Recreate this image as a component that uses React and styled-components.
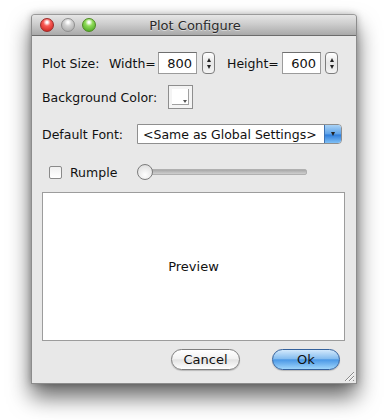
import React from 'react';
import styled, { createGlobalStyle } from 'styled-components';

const Global = createGlobalStyle`
    html, body {
        margin: 0;
        padding: 0;
        background: #ffffff;
    }
    body {
        font-family: "DejaVu Sans", "Liberation Sans", sans-serif;
        font-size: 12.5px;
        color: #111;
    }
`;

const Stage = styled.div`
    width: 390px;
    height: 420px;
    padding: 14px 0 0 31px;
    box-sizing: border-box;
`;

const Window = styled.div`
    position: relative;
    width: 326px;
    height: 370px;
    box-sizing: border-box;
    background: #e8e8e8;
    border: 1px solid #8c8c8c;
    border-top-color: #9a9a9a;
    border-radius: 4px 4px 0 0;
    box-shadow: 0 13px 22px rgba(0, 0, 0, 0.6), 0 0 7px rgba(0, 0, 0, 0.25);
    display: flex;
    flex-direction: column;
`;

const TitleBar = styled.div`
    height: 20px;
    flex: none;
    display: flex;
    align-items: center;
    padding-left: 8px;
    border-bottom: 1px solid #6c6c6c;
    border-radius: 3px 3px 0 0;
    background: linear-gradient(#e6e6e6, #cdcdcd 45%, #a9a9a9);
`;

const Lights = styled.div`
    display: flex;
    gap: 7px;
`;

const Light = styled.span`
    width: 14px;
    height: 14px;
    border-radius: 50%;
    box-sizing: border-box;
    border: 1px solid ${p => p.edge};
    background: radial-gradient(circle at 50% 28%, #ffffff 0 8%, ${p => p.hi} 35%, ${p => p.lo} 100%);
`;

const Title = styled.div`
    flex: 1;
    text-align: center;
    margin-right: 62px;
    font-size: 13px;
    color: #2a2a2a;
    text-shadow: 0 1px 0 rgba(255, 255, 255, 0.5);
`;

const Body = styled.div`
    flex: 1;
    display: flex;
    flex-direction: column;
    padding: 16px 11px 0 10px;
`;

const Row = styled.div`
    display: flex;
    align-items: center;
    height: ${p => p.h}px;
    margin-top: ${p => p.mt || 0}px;
    padding-left: ${p => p.pl || 0}px;
`;

const Label = styled.span`
    width: ${p => p.w}px;
    flex: none;
    white-space: nowrap;
`;

const NumField = styled.div`
    width: 39px;
    height: 22px;
    box-sizing: border-box;
    background: #fff;
    border: 1px solid #9b9b9b;
    border-top-color: #6f6f6f;
    display: flex;
    align-items: center;
    justify-content: flex-end;
    padding-right: 4px;
    font-size: 13px;
`;

const Stepper = styled.div`
    width: 13px;
    height: 22px;
    box-sizing: border-box;
    margin-left: ${p => p.ml}px;
    border: 1px solid #7d7d7d;
    border-radius: 4px;
    background: linear-gradient(#ffffff, #e6e6e6 50%, #f4f4f4);
    display: flex;
    flex-direction: column;
    align-items: center;
    justify-content: center;
    gap: 3px;
`;

const Arrow = styled.span`
    width: 0;
    height: 0;
    border-left: 2.5px solid transparent;
    border-right: 2.5px solid transparent;
    ${p => (p.up ? 'border-bottom: 4px solid #222;' : 'border-top: 4px solid #222;')}
`;

const ColorWell = styled.div`
    width: 25px;
    height: 24px;
    box-sizing: border-box;
    border: 1px solid #8e8e8e;
    background: #f4f4f4;
    padding: 3px;
    display: flex;
`;

const WellInner = styled.div`
    flex: 1;
    background: #fff;
    border-right: 1px solid #a0a0a0;
    border-bottom: 1px solid #a0a0a0;
    position: relative;
`;

const WellTri = styled.span`
    position: absolute;
    right: 1px;
    bottom: 1px;
    border-left: 2.5px solid transparent;
    border-right: 2.5px solid transparent;
    border-top: 3px solid #555;
`;

const Popup = styled.div`
    width: 205px;
    height: 20px;
    box-sizing: border-box;
    display: flex;
    background: #fff;
    border: 1px solid #8f8f8f;
    border-radius: 0 4px 4px 0;
    overflow: hidden;
`;

const PopupText = styled.div`
    flex: 1;
    padding-left: 5px;
    display: flex;
    align-items: center;
    white-space: nowrap;
`;

const PopupArrow = styled.div`
    width: 16px;
    background: linear-gradient(#a9d2f6, #5fa3e8 50%, #2f7ddb 55%, #7fc0f6);
    border-left: 1px solid #3f72b0;
    display: flex;
    align-items: center;
    justify-content: center;
`;

const Check = styled.span`
    width: 13px;
    height: 13px;
    box-sizing: border-box;
    flex: none;
    border: 1px solid #8a8a8a;
    border-radius: 2px;
    background: linear-gradient(#f0f0f0, #ffffff);
    margin-right: 8px;
`;

const Slider = styled.div`
    width: 170px;
    height: 18px;
    position: relative;
    display: flex;
    align-items: center;
`;

const Track = styled.div`
    flex: 1;
    height: 4px;
    margin-left: 4px;
    border-radius: 2px;
    background: linear-gradient(#a8a8a8, #cfcfcf);
    border: 1px solid #b0b0b0;
`;

const Knob = styled.span`
    position: absolute;
    left: 0;
    top: 1px;
    width: 16px;
    height: 16px;
    box-sizing: border-box;
    border-radius: 50%;
    border: 1px solid #7c7c7c;
    background: radial-gradient(circle at 50% 70%, #ffffff, #e4e4e4 70%, #cfcfcf);
`;

const Preview = styled.div`
    margin-top: 11px;
    height: 149px;
    box-sizing: border-box;
    background: #fff;
    border: 1px solid #9c9c9c;
    display: flex;
    align-items: center;
    justify-content: center;
    font-size: 13px;
`;

const Buttons = styled.div`
    display: flex;
    justify-content: flex-end;
    margin-top: 8px;
    padding-right: 5px;
    gap: 32px;
`;

const Button = styled.div`
    width: ${p => p.w}px;
    height: 21px;
    box-sizing: border-box;
    border-radius: 11px;
    display: flex;
    align-items: center;
    justify-content: center;
    font-size: 13px;
    border: 1px solid ${p => (p.primary ? '#34619c' : '#7e7e7e')};
    background: ${p => (p.primary
        ? 'linear-gradient(#d2e9fc, #86bdef 45%, #4b98e6 52%, #9fd5fb)'
        : 'linear-gradient(#ffffff, #f2f2f2 45%, #e2e2e2 52%, #ffffff)')};
    box-shadow: 0 1px 1px rgba(0, 0, 0, 0.2);
`;

const Grip = styled.svg`
    position: absolute;
    right: 1px;
    bottom: 1px;
`;

export default function App() {
    return (
        <Stage>
            <Global />
            <Window>
                <TitleBar>
                    <Lights>
                        <Light edge="#9a2a28" hi="#f85a55" lo="#c41a14" />
                        <Light edge="#8f8f8f" hi="#d2d2d2" lo="#a4a4a4" />
                        <Light edge="#4e8a22" hi="#8fdb58" lo="#3f9e1b" />
                    </Lights>
                    <Title>Plot Configure</Title>
                </TitleBar>
                <Body>
                    <Row h={22}>
                        <Label w={67}>Plot Size:</Label>
                        <Label w={49}>Width=</Label>
                        <NumField>800</NumField>
                        <Stepper ml={5}><Arrow up /><Arrow /></Stepper>
                        <Label w={12} />
                        <Label w={55}>Height=</Label>
                        <NumField>600</NumField>
                        <Stepper ml={4}><Arrow up /><Arrow /></Stepper>
                    </Row>
                    <Row h={24} mt={11}>
                        <Label w={126}>Background Color:</Label>
                        <ColorWell><WellInner><WellTri /></WellInner></ColorWell>
                    </Row>
                    <Row h={20} mt={15}>
                        <Label w={95}>Default Font:</Label>
                        <Popup>
                            <PopupText>&lt;Same as Global Settings&gt;</PopupText>
                            <PopupArrow><Arrow /></PopupArrow>
                        </Popup>
                    </Row>
                    <Row h={18} mt={19} pl={7}>
                        <Check />
                        <Label w={67}>Rumple</Label>
                        <Slider>
                            <Track />
                            <Knob />
                        </Slider>
                    </Row>
                    <Preview>Preview</Preview>
                    <Buttons>
                        <Button w={69}>Cancel</Button>
                        <Button w={68} primary>Ok</Button>
                    </Buttons>
                </Body>
                <Grip width="11" height="11" viewBox="0 0 11 11">
                    <path d="M10 1 L1 10 M10 5 L5 10 M10 9 L9 10" stroke="#8a8a8a" strokeWidth="1" />
                    <path d="M10 2 L2 10 M10 6 L6 10" stroke="#fafafa" strokeWidth="1" />
                </Grip>
            </Window>
        </Stage>
    );
}
